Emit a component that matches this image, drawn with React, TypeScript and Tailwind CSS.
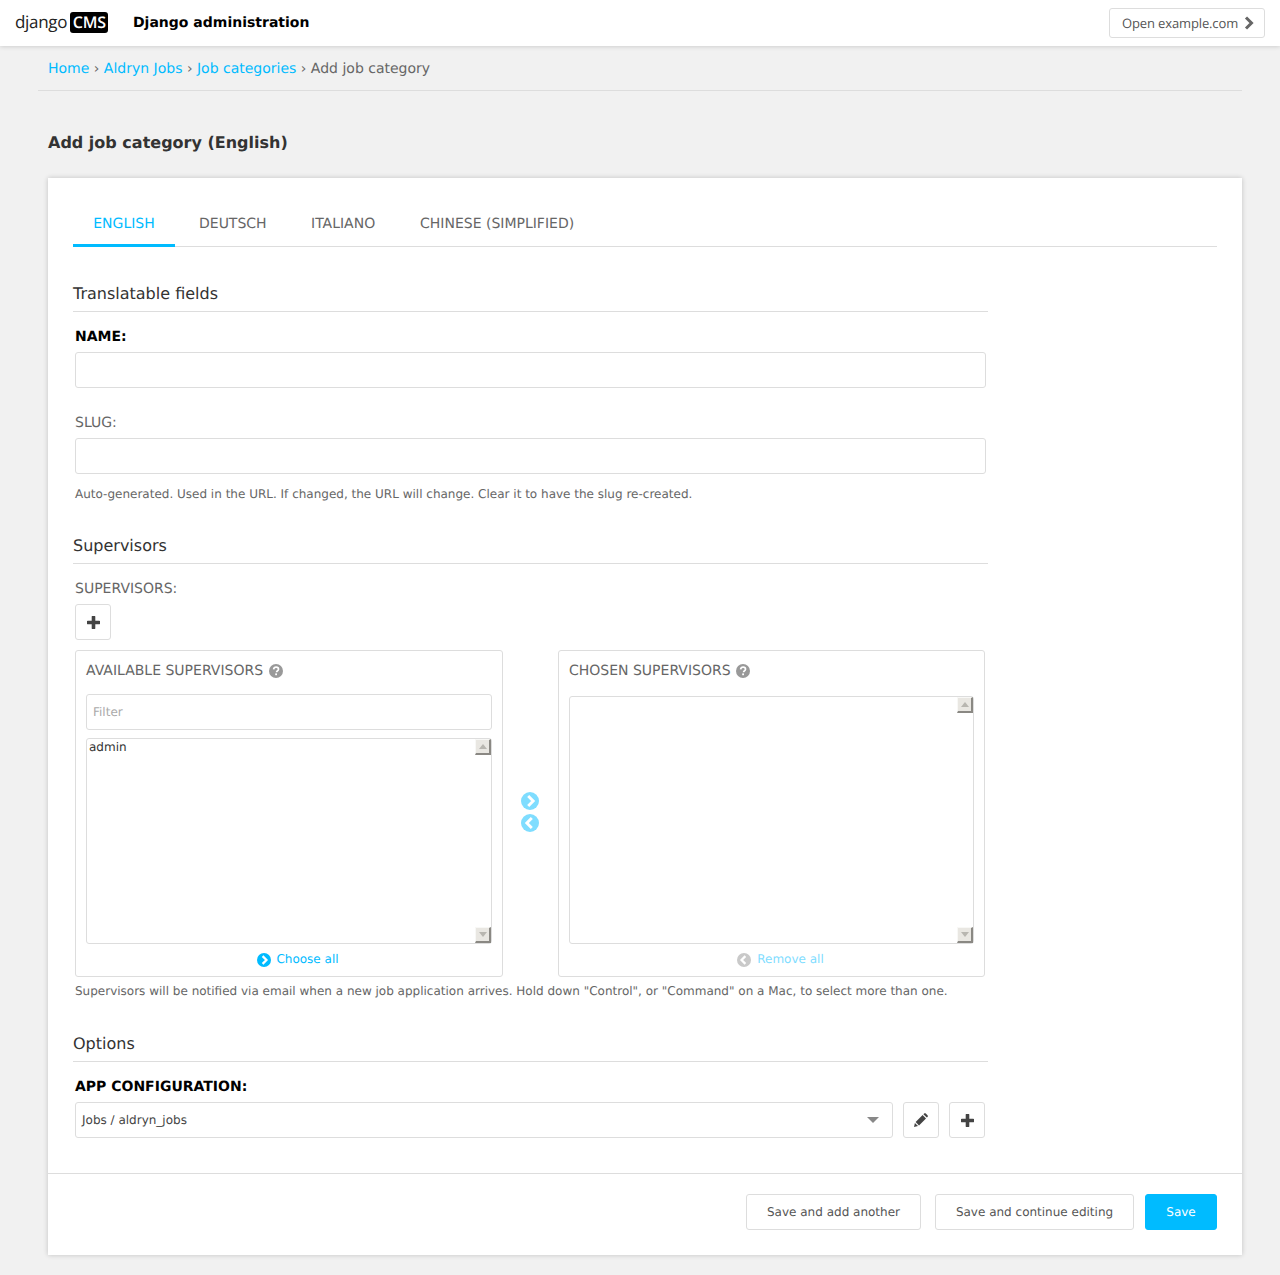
import React from 'react';

const tabs = ['English', 'Deutsch', 'Italiano', 'Chinese (Simplified)'];

function HelpIcon() {
  return (
    <svg width="14" height="14" viewBox="0 0 14 14" className="shrink-0">
      <circle cx="7" cy="7" r="7" fill="#999" />
      <path d="M4.6 5.4C4.8 4 5.8 3.2 7.1 3.2c1.4 0 2.4.9 2.4 2 0 1-.6 1.4-1.2 1.8-.5.3-.7.6-.7 1.2" fill="none" stroke="#fff" strokeWidth="1.7" />
      <rect x="6.2" y="9.4" width="1.8" height="1.8" fill="#fff" />
    </svg>
  );
}

function PlusIcon() {
  return (
    <svg width="13" height="13" viewBox="0 0 13 13">
      <path d="M6.5 1v11M1 6.5h11" fill="none" stroke="#444" strokeWidth="3.6" strokeLinecap="round" />
    </svg>
  );
}

function ArrowCircle({ dir, color, size, className = '' }: { dir: 'left' | 'right'; color: string; size: number; className?: string }) {
  return (
    <svg width={size} height={size} viewBox="0 0 20 20" className={`${className} shrink-0`}>
      <circle cx="10" cy="10" r="10" fill={color} />
      <path d={dir === 'right' ? 'M8 4.5l5.5 5.5L8 15.5' : 'M12 4.5L6.5 10l5.5 5.5'} fill="none" stroke="#fff" strokeWidth="3.2" />
    </svg>
  );
}

function ScrollButton({ up }: { up?: boolean }) {
  return (
    <div className="w-4 h-4 flex items-center justify-center bg-[#e9e7e2] border-t border-l border-t-[#f8f8f6] border-l-[#f8f8f6] border-r-2 border-b-2 border-r-[#8a8883] border-b-[#8a8883]">
      <svg width="8" height="5" viewBox="0 0 8 5">
        <path d={up ? 'M0 5l4-5 4 5z' : 'M0 0l4 5 4-5z'} fill="#b8b6b0" />
      </svg>
    </div>
  );
}

function ListBox({ height, children }: { height: string; children?: React.ReactNode }) {
  return (
    <div className={`${height} relative border border-[#ddd] rounded-[3px] bg-white flex justify-between`}>
      <div className="pl-[2px] pt-px text-[12px] leading-[15px] text-[#333]">{children}</div>
      <div className="flex flex-col justify-between">
        <ScrollButton up />
        <ScrollButton />
      </div>
    </div>
  );
}

function SectionTitle({ children, className }: { children: React.ReactNode; className: string }) {
  return (
    <h2 className={`${className} h-[37px] text-[16px] leading-[37px] text-[#333] border-b border-[#ddd]`}>{children}</h2>
  );
}

function SquareButton({ children, className = '' }: { children: React.ReactNode; className?: string }) {
  return (
    <div className={`${className} w-9 h-9 shrink-0 flex items-center justify-center bg-white border border-[#ddd] rounded-[3px] text-[#333]`}>
      {children}
    </div>
  );
}

function FooterButton({ children, primary, width }: { children: React.ReactNode; primary?: boolean; width: string }) {
  return (
    <div
      className={`${width} h-9 flex items-center justify-center rounded-[3px] text-[12px] border ${
        primary ? 'bg-[#00bbff] border-[#00bbff] text-white' : 'bg-white border-[#ddd] text-[#555]'
      }`}
    >
      {children}
    </div>
  );
}

export default function App() {
  return (
    <div className="min-h-[1275px] bg-[#f1f1f1] text-[#666] font-['DejaVu_Sans',sans-serif] [text-rendering:geometricPrecision]">
      {/* Header */}
      <header className="h-[46px] bg-white shadow-[0_0_5px_rgba(0,0,0,0.2)] flex items-center justify-between pl-[15px] pr-[15px]">
        <div className="flex items-center">
          <div className="flex items-center w-[118px] -mt-[2px]">
            <span className="font-['Open_Sans',sans-serif] text-[17px] leading-none text-[#222] tracking-[-0.3px] -mt-[2px]">django</span>
            <span className="ml-[3px] h-[21px] w-[38px] bg-black rounded-[3px] text-white font-['Open_Sans',sans-serif] font-semibold text-[16px] tracking-[-0.3px] leading-[21px] text-center">CMS</span>
          </div>
          <span className="font-bold text-[14px] text-black">Django administration</span>
        </div>
        <div className="h-[30px] w-[156px] flex items-center justify-between pl-3 pr-[10px] border border-[#ddd] rounded-[3px] font-['Open_Sans',sans-serif] text-[13px] tracking-[-0.01em] text-[#555] whitespace-nowrap">
          <span className="pt-[2px]">Open example.com</span>
          <svg width="10" height="14" viewBox="0 0 10 14" className="shrink-0">
            <path d="M2 1.5L7.5 7 2 12.5" fill="none" stroke="#666" strokeWidth="3" />
          </svg>
        </div>
      </header>

      {/* Breadcrumbs */}
      <div className="mx-[38px] h-[45px] px-[10px] border-b border-[#ddd] text-[14px] leading-[46px] whitespace-nowrap">
        <span className="text-[#00bbff]">Home</span> › <span className="text-[#00bbff]">Aldryn Jobs</span> ›{' '}
        <span className="text-[#00bbff]">Job categories</span> › Add job category
      </div>

      <h1 className="ml-[48px] mt-[41px] h-[22px] text-[16px] leading-[22px] font-bold text-[#333]">Add job category (English)</h1>

      {/* Card */}
      <main className="ml-[48px] mr-[38px] mt-[24px] h-[1077px] bg-white shadow-[0_0_5px_rgba(0,0,0,0.2)]">
        <div className="px-[25px] pt-[25px]">
          <div className="flex h-[44px] border-b border-[#ddd] uppercase text-[14px] leading-[42px]">
            <div className="w-[102px] h-[44px] text-center text-[#00bbff] border-b-[3px] border-[#00bbff]">{tabs[0]}</div>
            <div className="ml-6 w-[68px]">{tabs[1]}</div>
            <div className="ml-[44px] w-[65px]">{tabs[2]}</div>
            <div className="ml-[44px]">{tabs[3]}</div>
          </div>

          <div className="w-[915px]">
            <SectionTitle className="mt-[28px]">Translatable fields</SectionTitle>
            <div className="px-[2px]">
              <label className="block mt-[16px] h-[16px] text-[14px] leading-[18px] font-bold uppercase text-black">Name:</label>
              <div className="mt-[8px] h-9 border border-[#ddd] rounded-[3px]" />
              <label className="block mt-[26px] h-[16px] text-[14px] leading-[18px] uppercase">Slug:</label>
              <div className="mt-[8px] h-9 border border-[#ddd] rounded-[3px]" />
              <p className="mt-[12px] h-[15px] text-[12px] leading-[15px] pt-px">
                Auto-generated. Used in the URL. If changed, the URL will change. Clear it to have the slug re-created.
              </p>
            </div>

            <SectionTitle className="mt-[26px]">Supervisors</SectionTitle>
            <div className="px-[2px]">
              <label className="block mt-[16px] h-[16px] text-[14px] leading-[18px] uppercase">Supervisors:</label>
              <SquareButton className="mt-[8px]">
                <PlusIcon />
              </SquareButton>

              <div className="mt-[10px] flex">
                <div className="w-[428px] h-[327px] border border-[#ddd] rounded-[3px] px-[10px]">
                  <div className="mt-[11px] h-[18px] flex items-center gap-[6px] text-[14px] uppercase">
                    Available supervisors <HelpIcon />
                  </div>
                  <div className="mt-[14px] h-9 px-[6px] border border-[#ddd] rounded-[3px] text-[12px] leading-[34px] text-[#aaa]">Filter</div>
                  <div className="mt-2">
                    <ListBox height="h-[206px]">admin</ListBox>
                  </div>
                  <div className="mt-[6px] flex items-center justify-center gap-[5px] pl-[18px] text-[12px] text-[#00bbff]">
                    <ArrowCircle dir="right" color="#00bbff" size={14} className="mt-[2px]" />
                    Choose all
                  </div>
                </div>

                <div className="w-[55px] flex flex-col items-center gap-[4px] pt-[142px] pr-[2px]">
                  <ArrowCircle dir="right" color="#7fddff" size={18} />
                  <ArrowCircle dir="left" color="#7fddff" size={18} />
                </div>

                <div className="w-[427px] h-[327px] border border-[#ddd] rounded-[3px] px-[10px]">
                  <div className="mt-[11px] h-[18px] flex items-center gap-[5px] text-[14px] uppercase">
                    Chosen supervisors <HelpIcon />
                  </div>
                  <div className="mt-[16px]">
                    <ListBox height="h-[248px]" />
                  </div>
                  <div className="mt-[6px] flex items-center justify-center gap-[6px] pl-[18px] text-[12px] text-[#7fddff]">
                    <ArrowCircle dir="left" color="#c9c9c9" size={14} className="mt-[2px]" />
                    Remove all
                  </div>
                </div>
              </div>

              <p className="mt-[7px] h-[15px] text-[12px] leading-[15px] whitespace-nowrap">
                Supervisors will be notified via email when a new job application arrives. Hold down "Control", or "Command" on a Mac, to select more than one.
              </p>
            </div>

            <SectionTitle className="mt-[26px]">Options</SectionTitle>
            <div className="pl-[2px] pr-[3px]">
              <label className="block mt-[16px] h-[16px] text-[14px] leading-[18px] font-bold uppercase text-black">App configuration:</label>
              <div className="mt-[8px] flex gap-[10px]">
                <div className="flex-1 h-9 pl-[6px] pr-[13px] flex items-center justify-between border border-[#ddd] rounded-[3px] text-[12px] text-[#444]">
                  Jobs / aldryn_jobs
                  <svg width="12" height="6" viewBox="0 0 12 6">
                    <path d="M0 0h12L6 6z" fill="#888" />
                  </svg>
                </div>
                <SquareButton>
                  <svg width="14" height="14" viewBox="0 0 14 14">
                    <path d="M0 14l.9-4 3.1 3.1z" fill="#444" />
                    <path d="M1.6 9L8.6 2l3.4 3.4-7 7z" fill="#444" />
                    <path d="M9.4 1.2l.7-.7c.5-.5 1.2-.5 1.7 0l1.7 1.7c.5.5.5 1.2 0 1.7l-.7.7z" fill="#444" />
                  </svg>
                </SquareButton>
                <SquareButton>
                  <PlusIcon />
                </SquareButton>
              </div>
            </div>
          </div>
        </div>

        {/* Submit row */}
        <div className="mt-[35px] border-t border-[#ddd] pt-[20px] pr-[25px] flex justify-end">
          <FooterButton width="w-[175px]">Save and add another</FooterButton>
          <div className="ml-[14px]">
            <FooterButton width="w-[199px]">Save and continue editing</FooterButton>
          </div>
          <div className="ml-[11px]">
            <FooterButton primary width="w-[72px]">Save</FooterButton>
          </div>
        </div>
      </main>
    </div>
  );
}
